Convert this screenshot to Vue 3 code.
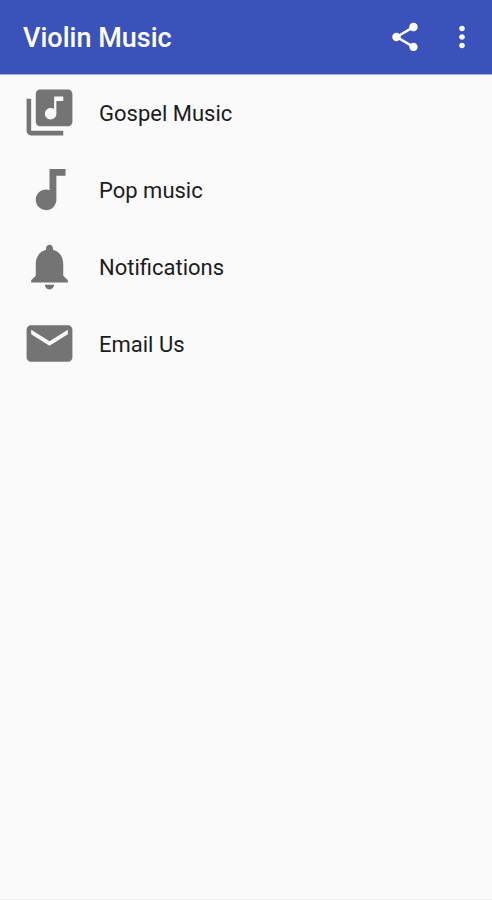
<template>
  <div class="screen">
    <header class="toolbar">
      <h1 class="toolbar-title">Violin Music</h1>
      <button class="btn-icon" type="button" aria-label="Share">
        <svg class="toolbar-icon" viewBox="0 0 24 24">
          <path d="M18 16.08c-.76 0-1.44.3-1.96.77L8.91 12.7c.05-.23.09-.46.09-.7s-.04-.47-.09-.7l7.05-4.11c.54.5 1.25.81 2.04.81 1.66 0 3-1.34 3-3s-1.34-3-3-3-3 1.34-3 3c0 .24.04.47.09.7L8.04 9.81C7.5 9.31 6.79 9 6 9c-1.66 0-3 1.34-3 3s1.34 3 3 3c.79 0 1.5-.31 2.04-.81l7.12 4.16c-.05.21-.08.43-.08.65 0 1.61 1.31 2.92 2.92 2.92s2.92-1.31 2.92-2.92-1.31-2.92-2.92-2.92z"/>
        </svg>
      </button>
      <button class="btn-icon" type="button" aria-label="More options">
        <svg class="toolbar-icon" viewBox="0 0 24 24">
          <path d="M12 8c1.1 0 2-.9 2-2s-.9-2-2-2-2 .9-2 2 .9 2 2 2zm0 2c-1.1 0-2 .9-2 2s.9 2 2 2 2-.9 2-2-.9-2-2-2zm0 6c-1.1 0-2 .9-2 2s.9 2 2 2 2-.9 2-2-.9-2-2-2z"/>
        </svg>
      </button>
    </header>

    <nav>
      <ul class="menu">
        <li v-for="item in items" :key="item.label">
          <a class="menu-item" href="#">
            <svg class="menu-icon" viewBox="0 0 24 24" aria-hidden="true">
              <path :d="item.icon"/>
            </svg>
            <span>{{ item.label }}</span>
          </a>
        </li>
      </ul>
    </nav>
  </div>
</template>

<script setup>
const items = [
  {
    label: 'Gospel Music',
    icon: 'M20 2H8c-1.1 0-2 .9-2 2v12c0 1.1.9 2 2 2h12c1.1 0 2-.9 2-2V4c0-1.1-.9-2-2-2zm-2 5h-3v5.5c0 1.38-1.12 2.5-2.5 2.5S10 13.88 10 12.5s1.12-2.5 2.5-2.5c.57 0 1.08.19 1.5.51V5h4v2zM4 6H2v14c0 1.1.9 2 2 2h14v-2H4V6z'
  },
  {
    label: 'Pop music',
    icon: 'M12 3v9.28c-.47-.17-.97-.28-1.5-.28C8.01 12 6 14.01 6 16.5S8.01 21 10.5 21c2.31 0 4.2-1.75 4.45-4H15V6h4V3h-7z'
  },
  {
    label: 'Notifications',
    icon: 'M12 22c1.1 0 2-.9 2-2h-4c0 1.1.89 2 2 2zm6-6v-5c0-3.07-1.64-5.64-4.5-6.32V4c0-.83-.67-1.5-1.5-1.5s-1.5.67-1.5 1.5v.68C7.63 5.36 6 7.92 6 11v5l-2 2v1h16v-1l-2-2z'
  },
  {
    label: 'Email Us',
    icon: 'M20 4H4c-1.1 0-1.99.9-1.99 2L2 18c0 1.1.9 2 2 2h16c1.1 0 2-.9 2-2V6c0-1.1-.9-2-2-2zm0 4l-8 5-8-5V6l8 5 8-5v2z'
  }
]
</script>

<style>
body { margin:0; background:#fafafa; }
</style>

<style scoped>
.screen { min-height:100vh; box-sizing:border-box; background:#fafafa; border-bottom:1px solid #eee; font-family:Roboto, "Liberation Sans", sans-serif; }
.toolbar { display:flex; align-items:center; height:75px; box-sizing:border-box; padding:0 8px 0 23px; background:#3b52bb; border-bottom:1px solid #a9b0e6; }
.toolbar-title { flex:1; margin:0; padding-top:2px; font-size:27px; font-weight:500; color:#fff; }
.btn-icon { display:flex; align-items:center; justify-content:center; width:44px; height:56px; margin-left:13px; padding:0; border:none; background:none; cursor:pointer; }
.toolbar-icon { width:34px; height:34px; fill:#fff; }
.menu { margin:0; padding:0; list-style:none; }
.menu-item { display:flex; align-items:center; gap:22px; height:77px; padding:0 22px; font-size:22px; color:#1c1c1c; text-decoration:none; }
.menu-icon { flex:none; width:55px; height:55px; margin-bottom:2px; fill:#747474; }
</style>
